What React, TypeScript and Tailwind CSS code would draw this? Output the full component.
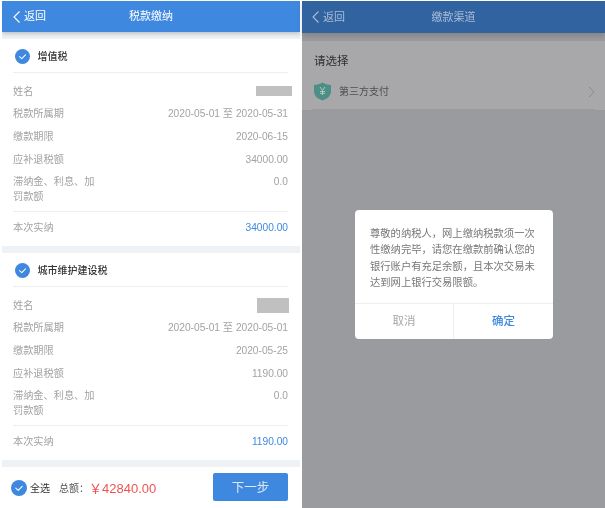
import React from "react";

const FONT = { fontFamily: '"Liberation Sans","Noto Sans CJK SC",sans-serif' };

function Check({ size = 15, className = "" }: { size?: number; className?: string }) {
  return (
    <svg width={size} height={size} viewBox="0 0 16 16" className={`shrink-0 ${className}`}>
      <circle cx="8" cy="8" r="8" fill="#3f88e0" />
      <path d="M4.8 8.2 L7.2 10.3 L11.2 6.3" fill="none" stroke="#fff" strokeWidth="1.1" strokeLinecap="round" strokeLinejoin="round" />
    </svg>
  );
}

function Back({ color }: { color: string }) {
  return (
    <svg width="9" height="14" viewBox="0 0 9 14" className="shrink-0">
      <path d="M7.5 1.5 L2 7 L7.5 12.5" fill="none" stroke={color} strokeWidth="1.1" />
    </svg>
  );
}

function Row({ label, children }: { label: React.ReactNode; children: React.ReactNode }) {
  return (
    <div className="flex justify-between h-[22.7px] items-center">
      <span>{label}</span>
      <span>{children}</span>
    </div>
  );
}

function TaxCard(props: {
  title: string;
  period: string;
  deadline: string;
  due: string;
  paid: string;
  maskClass: string;
}) {
  return (
    <section className="bg-white pl-[11px] pr-[12px] text-[10.2px] text-[#a3a3a3] h-[207px]">
      <div className="flex items-center gap-[8px] h-[34px] pt-[2px] border-b border-[#eeeeee] text-[10px] text-[#333] pl-[1.5px]">
        <Check />
        <span className="font-medium">{props.title}</span>
      </div>
      <div className="pt-[7px]">
        <Row label="姓名">
          <span className={`block bg-[#c0c0c0] ${props.maskClass}`} />
        </Row>
        <Row label="税款所属期">{props.period}</Row>
        <Row label="缴款期限">{props.deadline}</Row>
        <Row label="应补退税额">{props.due}</Row>
        <div className="flex justify-between pt-[3px] leading-[15px] pb-[7px]">
          <span className="w-[84px]">滞纳金、利息、加罚款额</span>
          <span>0.0</span>
        </div>
      </div>
      <div className="flex justify-between items-center border-t border-[#eeeeee] h-[33px]">
        <span>本次实纳</span>
        <span className="text-[#3f88e0]">{props.paid}</span>
      </div>
    </section>
  );
}

function LeftPanel() {
  return (
    <div className="w-[298px] ml-[2px] h-[507px] flex flex-col bg-[#eff2f5] overflow-hidden">
      <header className="relative h-[31px] shrink-0 bg-[#3f88e0] text-white shadow-[0_2px_4px_rgba(0,0,0,0.2)] flex items-center justify-center text-[11px]">
        <div className="absolute left-[10px] flex items-center gap-[3px]">
          <Back color="#ffffff" />
          <span>返回</span>
        </div>
        <span>税款缴纳</span>
      </header>
      <div className="flex-1 pt-[7px] flex flex-col gap-[7px] min-h-0">
        <TaxCard
          title="增值税"
          period="2020-05-01 至 2020-05-31"
          deadline="2020-06-15"
          due="34000.00"
          paid="34000.00"
          maskClass="w-[36px] h-[10px] -mr-[4px] -mt-[1px]"
        />
        <TaxCard
          title="城市维护建设税"
          period="2020-05-01 至 2020-05-01"
          deadline="2020-05-25"
          due="1190.00"
          paid="1190.00"
          maskClass="w-[32px] h-[15px] -mr-[1px]"
        />
      </div>
      <footer className="h-[41px] shrink-0 bg-white flex items-center pl-[9px] pr-[12px]">
        <Check size={16} className="mt-[1px]" />
        <span className="ml-[3px] mt-[2px] text-[10px] text-[#333]">全选</span>
        <span className="ml-[9px] mt-[2px] text-[10px] text-[#555]">总额：</span>
        <span className="mt-[2px] text-[13px] text-[#ef5350]">￥42840.00</span>
        <button className="ml-auto -mt-[1px] pt-[2px] w-[75px] h-[28px] rounded-[2px] bg-[#3f88e0] text-[#dbe9f9] text-[12.5px]">下一步</button>
      </footer>
    </div>
  );
}

function RightPanel() {
  return (
    <div className="relative flex-1 ml-[2px] h-[507px] flex flex-col bg-[#9a9b9f]">
      <header className="relative h-[32px] shrink-0 bg-[#30639f] text-[#a9bdd6] shadow-[0_3px_5px_rgba(0,0,0,0.15)] flex items-center justify-center text-[11px]">
        <div className="absolute left-[9px] flex items-center gap-[3px]">
          <Back color="#a9bdd6" />
          <span>返回</span>
        </div>
        <span>缴款渠道</span>
      </header>
      <div className="mt-[8px] bg-[#a8a8aa] px-[10px] h-[69px] flex flex-col">
        <div className="h-[24px] mt-[9px] pl-[2px] flex items-center text-[11.5px] text-[#2f2f2f]">请选择</div>
        <div className="flex-1 flex items-center pl-[2px] border-b border-[#9a9a9c] text-[10px] text-[#4f4f50]">
          <svg width="17" height="19" viewBox="0 0 17 19" className="shrink-0">
            <path d="M8.5 0.5 C11 2 14 2.8 17 3 V9.5 C17 14 13 17 8.5 18.5 C4 17 0 14 0 9.5 V3 C3 2.8 6 2 8.5 0.5Z" fill="#4d8f85" />
            <path d="M6 5 L8.5 8.5 L11 5 M8.5 8.5 V13 M6 9.5 H11 M6 11.3 H11" fill="none" stroke="#b4cdc8" strokeWidth="0.9" />
          </svg>
          <span className="ml-[8px]">第三方支付</span>
          <svg width="7" height="12" viewBox="0 0 7 12" className="ml-auto">
            <path d="M1 1 L6 6 L1 11" fill="none" stroke="#8a8a8c" strokeWidth="1" />
          </svg>
        </div>
      </div>
      <div className="absolute left-[53px] top-[209px] w-[198px] h-[129px] bg-white rounded-[4px] flex flex-col">
        <p className="flex-1 px-[15px] pt-[16px] text-[10.3px] leading-[16.3px] text-[#777]">
          尊敬的纳税人，网上缴纳税款须一次性缴纳完毕，请您在缴款前确认您的银行账户有充足余额，且本次交易未达到网上银行交易限额。
        </p>
        <div className="h-[36px] flex border-t border-[#eeeeee] text-[11.5px]">
          <span className="w-[99px] flex items-center justify-center text-[#a8a8a8] border-r border-[#eeeeee]">取消</span>
          <span className="flex-1 flex items-center justify-center text-[#3f88e0] font-medium">确定</span>
        </div>
      </div>
    </div>
  );
}

export default function App() {
  return (
    <div style={FONT} className="w-[605px] h-[508px] bg-white overflow-hidden pt-[1px] flex items-start blur-[0.35px]">
      <LeftPanel />
      <RightPanel />
    </div>
  );
}
